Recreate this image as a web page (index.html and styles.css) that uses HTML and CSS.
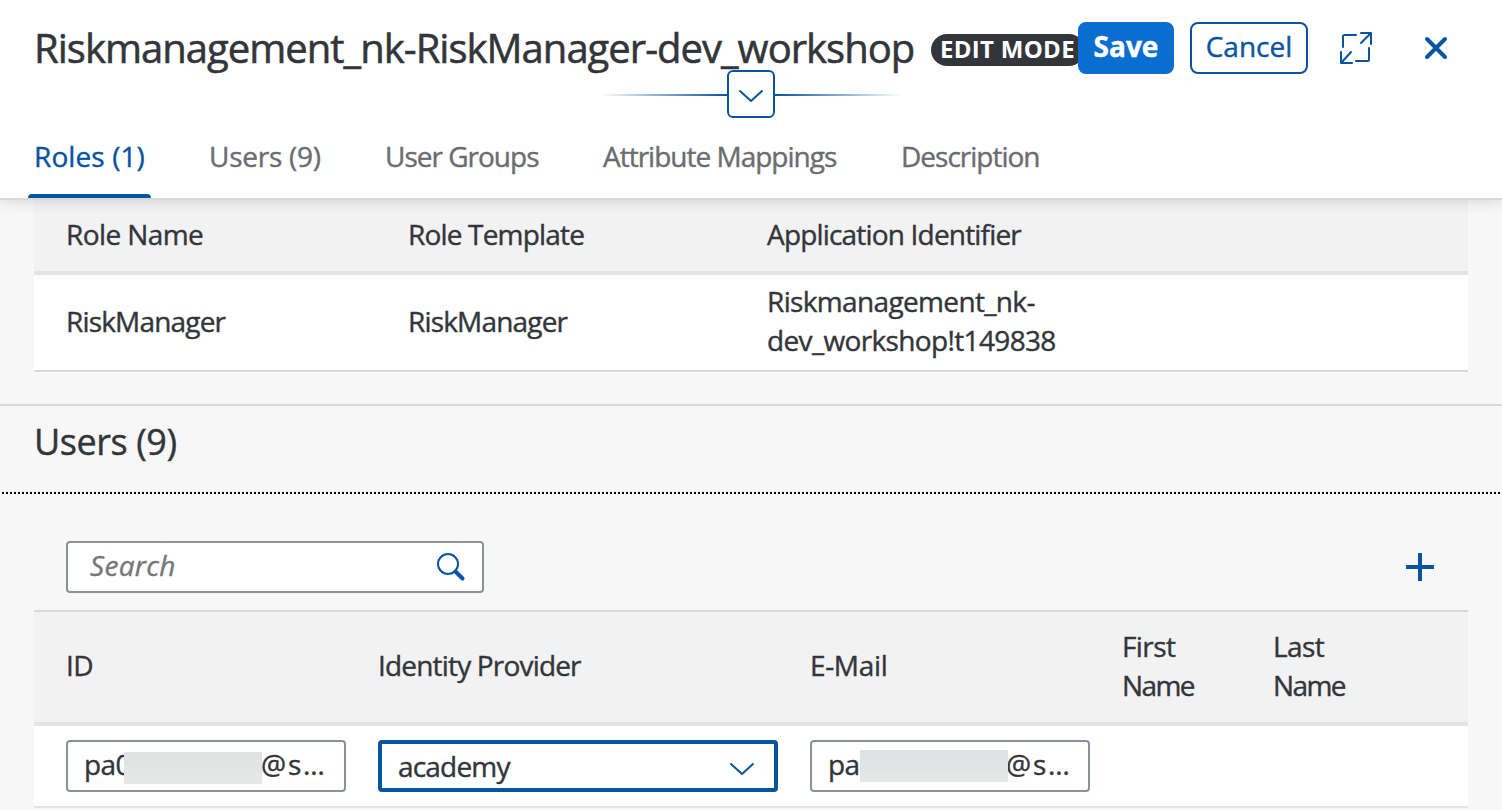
FILE: index.html
```html
<!DOCTYPE html>
<html lang="en">
<head>
<meta charset="utf-8">
<title>Role Collection</title>
<link rel="stylesheet" href="styles.css">
</head>
<body>
<div class="page">
  <header class="header">
    <div class="title-bar">
      <h1 class="title">Riskmanagement_nk-RiskManager-dev_workshop</h1>
      <span class="badge">EDIT MODE</span>
      <button class="btn btn-primary">Save</button>
      <button class="btn btn-outline">Cancel</button>
      <svg class="icon-expand" viewBox="0 0 34 34"><path d="M4 16V5.500Q4 4 5.500 4H17M30 17V28.500Q30 30 28.500 30H17M22 2H32V13M32 2L22 12M2 21V32H13M2 32L12 21"/></svg>
      <svg class="icon-close" viewBox="0 0 24 24"><path d="M3 3L21 21M21 3L3 21"/></svg>
    </div>
    <div class="expander">
      <span class="fade fade-left"></span>
      <button class="expander-btn"><svg class="chevron" viewBox="0 0 26 14"><path d="M2 2L13 12L24 2"/></svg></button>
      <span class="fade fade-right"></span>
    </div>
    <nav class="tabs">
      <a class="tab tab-active">Roles (1)</a>
      <a class="tab tab-users">Users (9)</a>
      <a class="tab tab-groups">User Groups</a>
      <a class="tab tab-attr">Attribute Mappings</a>
      <a class="tab tab-desc">Description</a>
    </nav>
  </header>
  <main class="content">
    <section class="roles">
      <div class="grid roles-head"><span class="h-name">Role Name</span><span>Role Template</span><span>Application Identifier</span></div>
      <div class="grid roles-row"><span>RiskManager</span><span>RiskManager</span><span class="app-id">Riskmanagement_nk-<br>dev_workshop!t149838</span></div>
    </section>
    <section class="users">
      <h2 class="section-title">Users (9)</h2>
      <div class="toolbar">
        <div class="search"><span>Search</span><svg class="icon-search" viewBox="0 0 30 30"><circle cx="12" cy="12" r="10"/><path d="M19.500 19.500L26.500 26.500"/></svg></div>
        <svg class="icon-add" viewBox="0 0 28 28"><path d="M14 0V28M0 14H28"/></svg>
      </div>
      <div class="grid users-grid users-head"><span class="h-id">ID</span><span>Identity Provider</span><span class="h-mail">E-Mail</span><span><span class="h-first">First</span><br><span class="h-person">Name</span></span><span><span class="h-first">Last</span><br><span class="h-person">Name</span></span></div>
      <div class="grid users-grid users-row">
        <div class="field"><span class="start-id">pa0</span><i class="mask mask-id"></i><span class="tail">@s…</span></div>
        <div class="field select"><span>academy</span><svg class="chevron" viewBox="0 0 26 14"><path d="M2 2L13 12L24 2"/></svg></div>
        <div class="field"><span class="start-mail">pa</span><i class="mask mask-mail"></i><span class="tail tail-mail">@s…</span></div>
      </div>
    </section>
  </main>
</div>
</body>
</html>
```
FILE: styles.css
```css
* { box-sizing: border-box; }
body { margin: 0; background: #f7f7f7; color: #32363a; font: 28px/39px "Open Sans", sans-serif; -webkit-text-stroke: .4px currentColor; }
.page { width: 1502px; height: 810px; overflow: hidden; }
svg { fill: none; stroke: #0854a0; stroke-width: 2; stroke-linecap: round; stroke-linejoin: round; flex: none; display: block; }
button { font: inherit; padding: 0; cursor: pointer; }
span { white-space: nowrap; }

.header { position: relative; z-index: 1; height: 200px; background: #fff; border-bottom: 2px solid #d9d9d9; box-shadow: 0 0 14px rgba(0,0,0,.16); }
.title-bar { display: flex; align-items: center; height: 96px; padding-left: 34px; }
.title { margin: 0; width: 897px; flex: none; font-size: 40px; line-height: 48px; font-weight: 400; white-space: nowrap; letter-spacing: -.98px; -webkit-text-stroke-width: .55px; }
.badge { width: 154px; height: 32px; flex: none; margin-top: 4px; padding-left: 9px; border-radius: 16px; background: #32363a; color: #fff; font-size: 24px; line-height: 30px; font-weight: 700; letter-spacing: .3px; -webkit-text-stroke: 0; }
.btn { position: relative; flex: none; height: 52px; padding-bottom: 3px; border-radius: 8px; }
.btn-primary { width: 96px; margin-left: -7px; border: 2px solid #0a6ed1; background: #0a6ed1; color: #fff; font-weight: 700; }
.btn-outline { width: 118px; margin-left: 16px; border: 2px solid #0854a0; background: #fff; color: #0854a0; }
.icon-expand { width: 34px; height: 34px; margin-left: 31px; }
.icon-close { width: 24px; height: 24px; margin-left: 51px; stroke-width: 4; }

.expander { position: relative; display: flex; align-items: center; justify-content: center; height: 48px; margin-top: -26px; }
.fade { width: 127px; height: 2px; margin-top: 2px; }
.fade-left { background: linear-gradient(to left, #0854a0, rgba(8,84,160,0)); }
.fade-right { background: linear-gradient(to right, #0854a0, rgba(8,84,160,0)); }
.expander-btn { display: grid; place-items: center; width: 48px; height: 48px; padding-top: 3px; border: 2px solid #0854a0; border-radius: 6px; background: #fff; }
.chevron { width: 26px; height: 14px; }

.tabs { display: flex; height: 80px; padding: 19px 0 0 28px; color: #6a6d70; letter-spacing: -1px; }
.tab { flex: none; }
.tab-active { width: 123px; padding-left: 6px; color: #0854a0; letter-spacing: .1px; }
.tab-active::after { content: ""; display: block; height: 4px; margin: 18px 0 0 -6px; border-radius: 4px 4px 0 0; background: #0854a0; }
.tab-users { margin-left: 58px; width: 176px; letter-spacing: -.25px; }
.tab-groups { width: 218px; }
.tab-attr { width: 298px; }

.grid { display: grid; align-items: center; margin: 0 34px; padding-left: 32px; grid-template-columns: 342px 359px 1fr; letter-spacing: -.82px; }
.roles-head { height: 75px; padding-bottom: 2px; background: #f2f2f2; border-bottom: 4px solid #e4e4e4; }
.h-name { letter-spacing: -.6px; }
.roles-row { height: 97px; padding-bottom: 3px; background: #fff; border-bottom: 2px solid #d9d9d9; }
.app-id { letter-spacing: -.65px; }
.users { margin-top: 32px; border-top: 2px solid #d9d9d9; }
.section-title { margin: 0; height: 88px; padding: 14px 34px 0; font-size: 36px; line-height: 44px; font-weight: 400; letter-spacing: -.45px; background: repeating-linear-gradient(to right, transparent 0 2px, #000 2px 4px) 0 100% / 1500px 2px no-repeat; }
.toolbar { display: flex; justify-content: space-between; align-items: flex-start; height: 118px; margin: 0 34px; padding: 47px 34px 0 32px; border-bottom: 2px solid #d9d9d9; }
.search { display: flex; align-items: center; justify-content: space-between; width: 418px; height: 52px; padding: 0 16px 3px 22px; border: 2px solid #89919a; border-radius: 4px; background: #fff; color: #74777a; font-style: italic; letter-spacing: .3px; }
.icon-search { width: 30px; height: 30px; margin-top: 3px; }
.icon-search path { stroke-width: 4; }
.icon-add { width: 28px; height: 28px; margin-top: 12px; stroke-width: 4; stroke-linecap: butt; }

.users-grid { grid-template-columns: 312px 432px 312px 151px 1fr; }
.users-head { height: 114px; padding-bottom: 3px; background: #f2f2f2; border-bottom: 4px solid #e4e4e4; }
.h-id { letter-spacing: -.5px; }
.h-mail { letter-spacing: -.35px; }
.h-first { letter-spacing: -.6px; }
.h-person { letter-spacing: -1.6px; }
.users-row { height: 82px; background: #fff; border-bottom: 2px solid #e5e5e5; }
.field { display: flex; align-items: center; width: 280px; height: 52px; padding: 0 0 4px 16px; border: 2px solid #89919a; border-radius: 4px; background: #fff; }
.select { width: 400px; padding: 0 19px 0 16px; justify-content: space-between; border: 4px solid #0854a0; }
.select .chevron { margin-top: 5px; }
.start-id { width: 40px; letter-spacing: -.6px; }
.start-mail { width: 32px; letter-spacing: -.6px; }
.mask { position: relative; height: 32px; flex: none; background: linear-gradient(#dfe1e2, #e6e7e7); }
.mask-id { width: 138px; margin-top: 8px; }
.mask-mail { width: 148px; margin-top: 4px; }
.tail { letter-spacing: 1.8px; margin-left: -1px; }
.tail-mail { margin-left: -2px; }
```
